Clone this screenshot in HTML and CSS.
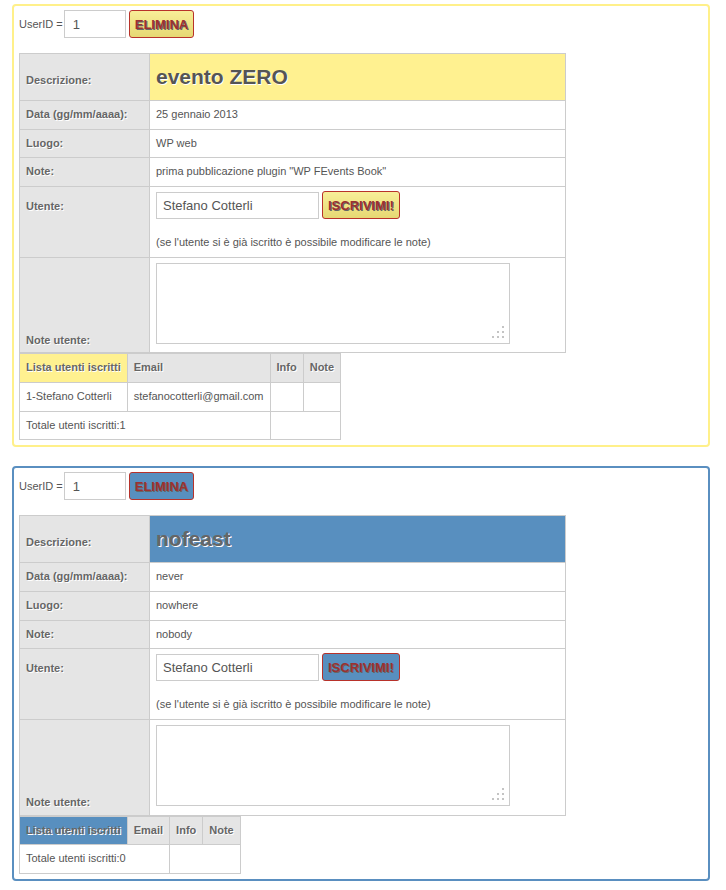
FILE: index.html
```html
<!DOCTYPE html>
<html lang="it">
<head>
<meta charset="utf-8">
<title>WP FEvents Book</title>
<link rel="stylesheet" href="styles.css">
</head>
<body>
<div class="event event-yellow">
  <div class="userrow">
    <span class="uid-label">UserID =</span>
    <input class="uid-input" type="text" value="1">
    <button class="btn">ELIMINA</button>
  </div>
  <table class="info">
    <tr><th>Descrizione:</th><td class="title">evento ZERO</td></tr>
    <tr><th>Data (gg/mm/aaaa):</th><td>25 gennaio 2013</td></tr>
    <tr><th>Luogo:</th><td>WP web</td></tr>
    <tr><th>Note:</th><td>prima pubblicazione plugin "WP FEvents Book"</td></tr>
    <tr><th>Utente:</th><td class="user-cell"><div class="subscribe"><input class="name-input" type="text" value="Stefano Cotterli"><button class="btn">ISCRIVIMI!</button></div><div class="hint">(se l'utente si è già iscritto è possibile modificare le note)</div></td></tr>
    <tr class="notes-row"><th>Note utente:</th><td class="notes-cell"><span class="ta-wrap"><textarea class="notes"></textarea><svg class="grip" width="12" height="12" viewBox="0 0 12 12"><rect x="10" y="0" width="2" height="2"/><rect x="5" y="5" width="2" height="2"/><rect x="10" y="5" width="2" height="2"/><rect x="0" y="10" width="2" height="2"/><rect x="5" y="10" width="2" height="2"/><rect x="10" y="10" width="2" height="2"/></svg></span></td></tr>
  </table>
  <table class="users">
    <tr><th class="list">Lista utenti iscritti</th><th>Email</th><th>Info</th><th>Note</th></tr>
    <tr><td>1-Stefano Cotterli</td><td>stefanocotterli@gmail.com</td><td></td><td></td></tr>
    <tr><td colspan="2">Totale utenti iscritti:1</td><td colspan="2"></td></tr>
  </table>
</div>

<div class="event event-blue">
  <div class="userrow">
    <span class="uid-label">UserID =</span>
    <input class="uid-input" type="text" value="1">
    <button class="btn">ELIMINA</button>
  </div>
  <table class="info">
    <tr><th>Descrizione:</th><td class="title">nofeast</td></tr>
    <tr><th>Data (gg/mm/aaaa):</th><td>never</td></tr>
    <tr><th>Luogo:</th><td>nowhere</td></tr>
    <tr><th>Note:</th><td>nobody</td></tr>
    <tr><th>Utente:</th><td class="user-cell"><div class="subscribe"><input class="name-input" type="text" value="Stefano Cotterli"><button class="btn">ISCRIVIMI!</button></div><div class="hint">(se l'utente si è già iscritto è possibile modificare le note)</div></td></tr>
    <tr class="notes-row"><th>Note utente:</th><td class="notes-cell"><span class="ta-wrap"><textarea class="notes"></textarea><svg class="grip" width="12" height="12" viewBox="0 0 12 12"><rect x="10" y="0" width="2" height="2"/><rect x="5" y="5" width="2" height="2"/><rect x="10" y="5" width="2" height="2"/><rect x="0" y="10" width="2" height="2"/><rect x="5" y="10" width="2" height="2"/><rect x="10" y="10" width="2" height="2"/></svg></span></td></tr>
  </table>
  <table class="users">
    <tr><th class="list">Lista utenti iscritti</th><th>Email</th><th>Info</th><th>Note</th></tr>
    <tr><td colspan="2">Totale utenti iscritti:0</td><td colspan="2"></td></tr>
  </table>
</div>
</body>
</html>
```
FILE: styles.css
```css
html, body {
  margin: 0;
  padding: 0;
  background: #fff;
}
body {
  font-family: "Liberation Sans", Arial, sans-serif;
  font-size: 11px;
  color: #555;
  padding-top: 4px;
}
.event {
  box-sizing: border-box;
  width: 698px;
  margin: 0 0 19px 12px;
  border: 2px solid #fff08a;
  border-radius: 4px;
  padding: 4px 5px 5px 5px;
}
.event-blue {
  border-color: #5a8fc0;
}
.userrow {
  display: flex;
  align-items: center;
  height: 28px;
  margin-bottom: 15px;
}
.uid-label {
  font-size: 11px;
  color: #555;
  margin-right: 1px;
}
.uid-input {
  box-sizing: border-box;
  width: 62px;
  height: 28px;
  border: 1px solid #ccc;
  padding: 0 8px;
  font-family: "Liberation Sans", Arial, sans-serif;
  font-size: 13px;
  color: #555;
  margin: 0 3px 0 0;
  outline: none;
}
.btn {
  box-sizing: border-box;
  height: 28px;
  padding: 0 5px;
  margin: 0;
  border: 1px solid #b8322a;
  border-radius: 3px;
  background: linear-gradient(#f8ee98, #e6d873);
  font-family: "Liberation Sans", Arial, sans-serif;
  font-size: 13px;
  font-weight: bold;
  color: #9c3030;
  text-shadow: 1px 1px 0 #666;
  cursor: pointer;
}
.event-blue .btn {
  background: #588fbf;
}
table {
  border-collapse: collapse;
  border-spacing: 0;
}
th, td {
  border: 1px solid #ccc;
  padding: 4px 6px;
  line-height: 19.67px;
  font-size: 11px;
  text-align: left;
  vertical-align: baseline;
}
th {
  font-weight: bold;
  color: #666;
  background: #e5e5e5;
  text-shadow: 1px 1px 0 #fff;
}
td {
  color: #555;
  background: #fff;
}
.info {
  width: 547px;
}
.info th {
  box-sizing: border-box;
  width: 130px;
}
.info td.title {
  background: #fff190;
  font-size: 21px;
  font-weight: bold;
  line-height: 38px;
  color: #555;
  text-shadow: 1px 1px 0 #fff;
}
.event-blue .info td.title {
  background: #588fbf;
  color: #666;
}
.subscribe {
  display: flex;
  align-items: center;
  height: 28px;
}
.name-input {
  box-sizing: border-box;
  width: 163px;
  height: 27px;
  border: 1px solid #ccc;
  padding: 0 6px;
  margin: 0 3px 0 0;
  font-family: "Liberation Sans", Arial, sans-serif;
  font-size: 13px;
  color: #555;
  outline: none;
}
.hint {
  margin-top: 14px;
}
.notes-row th {
  padding-bottom: 2px;
}
.notes-cell {
  padding-top: 5px;
  padding-bottom: 0;
}
.ta-wrap {
  position: relative;
  display: inline-block;
  vertical-align: baseline;
}
.notes {
  box-sizing: border-box;
  display: block;
  width: 354px;
  height: 81px;
  border: 1px solid #ccc;
  margin: 0;
  padding: 4px;
  resize: none;
  font-family: "Liberation Sans", Arial, sans-serif;
  font-size: 12px;
  outline: none;
}
.grip {
  position: absolute;
  right: 6px;
  bottom: 6px;
  fill: #c4c4c4;
}
.users th.list {
  background: #fff190;
}
.event-blue .users th.list {
  background: #588fbf;
  color: #666;
}
```
